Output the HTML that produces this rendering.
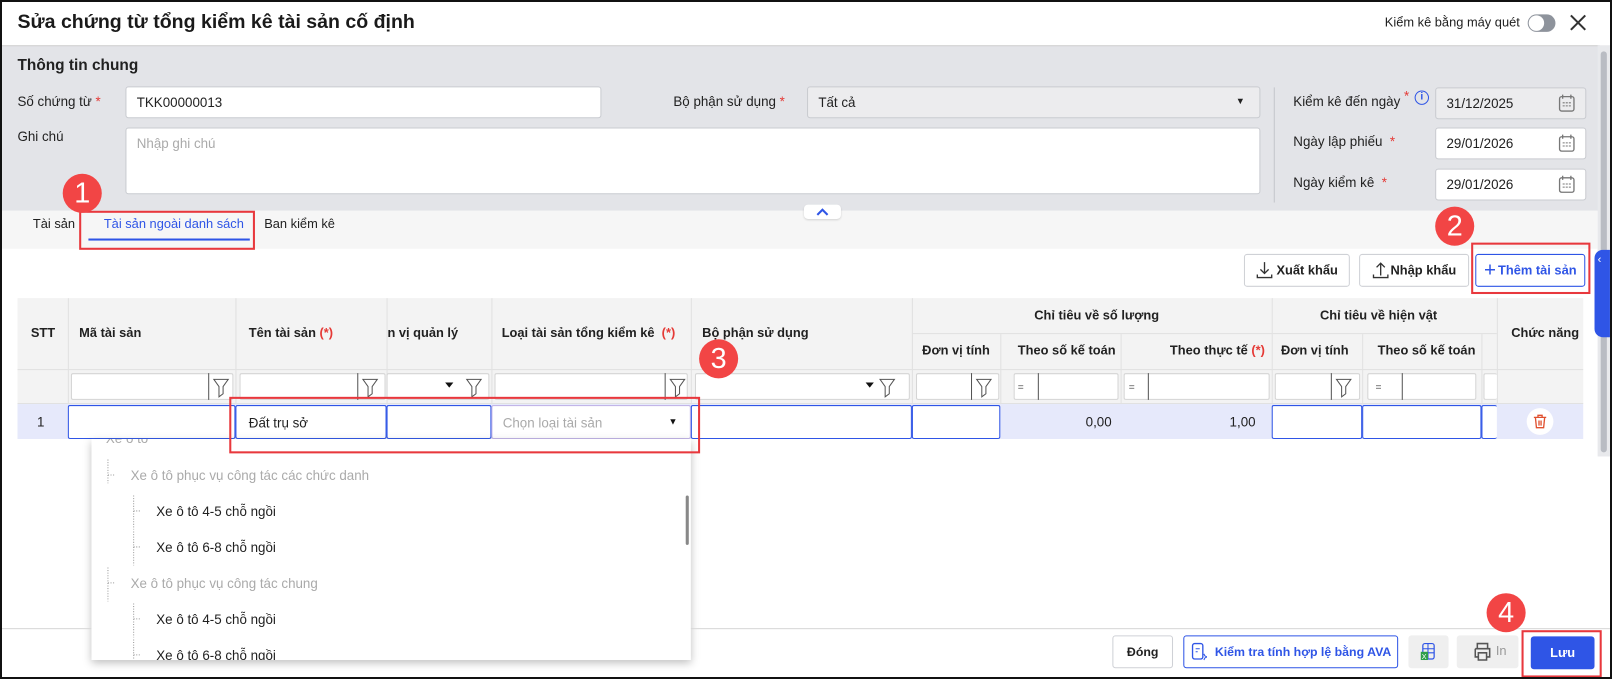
<!DOCTYPE html><html><head><meta charset="utf-8"><style>
*{box-sizing:border-box;margin:0;padding:0}
body{width:1612px;height:679px;overflow:hidden;font-family:"Liberation Sans",sans-serif;font-size:13px;color:#212121;background:#fff;position:relative}
#w{position:absolute;left:0;top:0;width:1568px;height:660px;transform:scale(1.02806);transform-origin:0 0}
.a{position:absolute}
.in{position:absolute;background:#fff;border:1px solid #c9cbd0;border-radius:3px}
.lbl{position:absolute;font-size:13px;color:#212121}
.req{color:#e53935}
.th{position:absolute;font-weight:bold;font-size:12.5px;color:#212121;display:flex;align-items:center}
.vl{position:absolute;width:1px;background:#e1e1e1}
.f{position:absolute;background:#fff;border:1px solid #d5d5d5;border-radius:2px;height:26px;top:363px}
.red{position:absolute;border:2.5px solid #e8383d}
.num{position:absolute;width:38px;height:38px;border-radius:50%;background:#f24545;color:#fff;font-size:28px;display:flex;align-items:center;justify-content:center}
.btn{position:absolute;border:1px solid #cfd1d6;border-radius:3px;background:#fff;display:flex;align-items:center;justify-content:center;font-size:12.5px;font-weight:bold}
.cell{position:absolute;border:1.5px solid #2f55e6;border-radius:2px;background:#fff;top:394px;height:33px}
.dd{font-size:13px;position:absolute}
</style></head><body>
<div class="a" style="left:0;top:0;width:1612px;height:679px;border:2px solid #111;z-index:50;pointer-events:none"></div>
<div id="w">
<div class="a" style="left:17px;top:11px;font-size:19px;font-weight:bold;color:#1a1a1a">Sửa chứng từ tổng kiểm kê tài sản cố định</div>
<div class="a" style="left:1347px;top:15px;font-size:12.5px">Kiểm kê bằng máy quét</div>
<div class="a" style="left:1486px;top:14px;width:27px;height:17px;border-radius:9px;background:#8e939c"><div class="a" style="left:1px;top:1px;width:15px;height:15px;border-radius:50%;background:#fff"></div></div>
<svg class="a" style="left:1527px;top:14px" width="16" height="16"><path d="M1 1L15 15M15 1L1 15" stroke="#333" stroke-width="2"/></svg>
<div class="a" style="left:2px;top:44px;width:1554px;height:161px;background:#e3e4e8;border-top:1px solid #d0d0d0"></div>
<div class="a" style="left:1554px;top:44px;width:12px;height:400px;background:#e8e9ec"></div>
<div class="a" style="left:1557px;top:50px;width:6px;height:390px;background:#b9bcc3;border-radius:3px"></div>
<div class="a" style="left:17px;top:55px;font-size:15px;font-weight:bold">Thông tin chung</div>
<div class="lbl" style="left:17px;top:91px">Số chứng từ <span class="req">*</span></div>
<div class="in" style="left:122px;top:84px;width:463px;height:31px;padding:7px 10px">TKK00000013</div>
<div class="lbl" style="left:17px;top:125px">Ghi chú</div>
<div class="in" style="left:122px;top:124px;width:1104px;height:65px;padding:7px 10px;color:#aaa">Nhập ghi chú</div>
<div class="lbl" style="left:655px;top:91px">Bộ phận sử dụng <span class="req">*</span></div>
<div class="in" style="left:785px;top:84px;width:441px;height:31px;background:#ececee;padding:7px 10px">Tất cả<span style="position:absolute;right:14px;top:8px;font-size:9px">▼</span></div>
<div class="a" style="left:1239px;top:85px;width:1px;height:112px;background:#c4c6cb"></div>
<div class="lbl" style="left:1258px;top:91px">Kiểm kê đến ngày <span class="req" style="position:relative;top:-5px">*</span></div>
<div class="a" style="left:1376px;top:88px;width:14px;height:14px;border:1.5px solid #2f55e6;border-radius:50%;color:#2f55e6;font-size:10px;text-align:center;line-height:11px;font-weight:bold">i</div>
<div class="lbl" style="left:1258px;top:130px">Ngày lập phiếu <span class="req">&nbsp;*</span></div>
<div class="lbl" style="left:1258px;top:170px">Ngày kiểm kê <span class="req">&nbsp;*</span></div>
<div class="in" style="left:1396px;top:85px;width:147px;height:31px;background:#ececee;padding:7px 10px">31/12/2025</div>
<div class="in" style="left:1396px;top:124px;width:147px;height:31px;padding:7px 10px">29/01/2026</div>
<div class="in" style="left:1396px;top:164px;width:147px;height:31px;padding:7px 10px">29/01/2026</div>
<svg class="a" style="left:1516px;top:91px" width="16" height="18"><rect x="1" y="3" width="14" height="14" rx="2" fill="none" stroke="#777" stroke-width="1.3"/><path d="M4 1v4M12 1v4" stroke="#777" stroke-width="1.3"/><path d="M4 9h2M7 9h2M10 9h2M4 12h2M7 12h2M10 12h2" stroke="#777"/></svg>
<svg class="a" style="left:1516px;top:130px" width="16" height="18"><rect x="1" y="3" width="14" height="14" rx="2" fill="none" stroke="#777" stroke-width="1.3"/><path d="M4 1v4M12 1v4" stroke="#777" stroke-width="1.3"/><path d="M4 9h2M7 9h2M10 9h2M4 12h2M7 12h2M10 12h2" stroke="#777"/></svg>
<svg class="a" style="left:1516px;top:170px" width="16" height="18"><rect x="1" y="3" width="14" height="14" rx="2" fill="none" stroke="#777" stroke-width="1.3"/><path d="M4 1v4M12 1v4" stroke="#777" stroke-width="1.3"/><path d="M4 9h2M7 9h2M10 9h2M4 12h2M7 12h2M10 12h2" stroke="#777"/></svg>
<div class="a" style="left:2px;top:205px;width:1552px;height:37px;background:#f6f6f6"></div>
<div class="a" style="left:782px;top:199px;width:36px;height:14px;background:#fff;border-radius:4px;box-shadow:0 1px 2px rgba(0,0,0,.15)"></div>
<svg class="a" style="left:794px;top:202px" width="12" height="8"><path d="M1 7L6 2L11 7" fill="none" stroke="#2f55e6" stroke-width="2"/></svg>
<div class="a" style="left:32px;top:211px;font-size:12.5px">Tài sản</div>
<div class="a" style="left:101px;top:211px;font-size:12.5px;color:#2f55e6">Tài sản ngoài danh sách</div>
<div class="a" style="left:86px;top:232px;width:157px;height:2px;background:#2f55e6"></div>
<div class="a" style="left:257px;top:211px;font-size:12.5px">Ban kiểm kê</div>
<div class="btn" style="left:1210px;top:247px;width:103px;height:32px"><svg width="16" height="18" style="margin-right:4px"><path d="M8 1v11M4 8l4 4 4-4M1 13v3h14v-3" fill="none" stroke="#333" stroke-width="1.3"/></svg>Xuất khẩu</div>
<div class="btn" style="left:1322px;top:247px;width:107px;height:32px"><svg width="16" height="18" style="margin-right:2px"><path d="M8 14V2M4 6l4-4 4 4M1 13v3h14v-3" fill="none" stroke="#333" stroke-width="1.3"/></svg>Nhập khẩu</div>
<div class="btn" style="left:1435px;top:247px;width:107px;height:32px;border-color:#2f55e6;color:#2f55e6"><span style="font-size:20px;font-weight:normal;margin-right:2px">+</span>Thêm tài sản</div>
<div class="a" style="left:1551px;top:243px;width:15px;height:85px;background:#2f55e6;border-radius:8px 0 0 8px;color:#fff;font-size:11px;padding-top:4px;padding-left:3px">‹</div>
<div class="a" style="left:17px;top:290px;width:1523px;height:103px;background:#f3f3f3;border-bottom:1px solid #e1e1e1"></div>
<div class="a" style="left:17px;top:359px;width:1523px;height:1px;background:#e1e1e1"></div>
<div class="a" style="left:887px;top:324px;width:569px;height:1px;background:#e1e1e1"></div>
<div class="vl" style="left:66px;top:290px;height:137px"></div>
<div class="vl" style="left:229px;top:290px;height:137px"></div>
<div class="vl" style="left:376px;top:290px;height:137px"></div>
<div class="vl" style="left:478px;top:290px;height:137px"></div>
<div class="vl" style="left:672px;top:290px;height:137px"></div>
<div class="vl" style="left:887px;top:290px;height:137px"></div>
<div class="vl" style="left:973px;top:325px;height:102px"></div>
<div class="vl" style="left:1090px;top:325px;height:102px"></div>
<div class="vl" style="left:1237px;top:290px;height:137px"></div>
<div class="vl" style="left:1325px;top:325px;height:102px"></div>
<div class="vl" style="left:1441px;top:325px;height:102px"></div>
<div class="vl" style="left:1456px;top:290px;height:137px"></div>
<div class="th" style="left:30px;top:317px">STT</div>
<div class="th" style="left:77px;top:317px">Mã tài sản</div>
<div class="th" style="left:242px;top:317px">Tên tài sản&nbsp;<span class="req">(*)</span></div>
<div class="a" style="left:377px;top:317px;width:100px;overflow:hidden;font-weight:bold;font-size:12.5px;white-space:nowrap"><span style="margin-left:-9px">ơn vị quản lý</span></div>
<div class="th" style="left:488px;top:317px">Loại tài sản tổng kiểm kê&nbsp;&nbsp;<span class="req">(*)</span></div>
<div class="th" style="left:683px;top:317px">Bộ phận sử dụng</div>
<div class="th" style="left:1006px;top:300px">Chỉ tiêu về số lượng</div>
<div class="a" style="left:1238px;top:300px;width:218px;overflow:hidden;white-space:nowrap;font-weight:bold;font-size:12.5px;padding-left:46px">Chỉ tiêu về hiện vật</div>
<div class="th" style="left:1470px;top:317px">Chức năng</div>
<div class="th" style="left:897px;top:334px">Đơn vị tính</div>
<div class="th" style="left:990px;top:334px">Theo số kế toán</div>
<div class="th" style="left:1138px;top:334px">Theo thực tế&nbsp;<span class="req">(*)</span></div>
<div class="th" style="left:1246px;top:334px">Đơn vị tính</div>
<div class="th" style="left:1340px;top:334px">Theo số kế toán</div>
<div class="f" style="left:69px;width:158px"></div>
<div class="f" style="left:233px;width:142px"></div>
<div class="f" style="left:376px;width:100px"></div>
<div class="f" style="left:481px;width:188px"></div>
<div class="f" style="left:676px;width:209px"></div>
<div class="f" style="left:891px;width:81px"></div>
<div class="f" style="left:986px;width:102px"></div>
<div class="f" style="left:1093px;width:142px"></div>
<div class="f" style="left:1240px;width:83px"></div>
<div class="f" style="left:1330px;width:106px"></div>
<div class="f" style="left:1443px;width:13px;border-right:none"></div>
<svg class="a" style="left:0;top:360px" width="1456" height="33">
<g fill="none" stroke="#555" stroke-width="1"><path d="M203 3v26M208 9h14l-5 7v7l-4 3v-10z"/><path d="M348 3v26M353 9h14l-5 7v7l-4 3v-10z"/><path d="M454 9h14l-5 7v7l-4 3v-10z"/><path d="M647 3v26M652 9h14l-5 7v7l-4 3v-10z"/><path d="M856 9h14l-5 7v7l-4 3v-10z"/><path d="M945 3v26M950 9h14l-5 7v7l-4 3v-10z"/><path d="M1010 3v26M1117 3v26M1364 3v26"/><path d="M1295 3v26M1300 9h14l-5 7v7l-4 3v-10z"/></g>
<path d="M433 12h8l-4 5z M842 12h8l-4 5z" fill="#111"/>
<g font-size="10" fill="#555" font-family="Liberation Sans"><text x="990" y="20">=</text><text x="1098" y="20">=</text><text x="1338" y="20">=</text></g>
</svg>
<div class="a" style="left:17px;top:393px;width:1523px;height:34px;background:#e6e9fb"></div>
<div class="a" style="left:36px;top:403px">1</div>
<div class="cell" style="left:66px;width:163px"></div>
<div class="cell" style="left:229px;width:147px;padding:9px 12px">Đất trụ sở</div>
<div class="cell" style="left:376px;width:102px"></div>
<div class="cell" style="left:478px;width:194px;border-color:#c2b5e8;padding:9px 10px;color:#aaa">Chọn loại tài sản<span style="position:absolute;right:12px;top:10px;color:#111;font-size:9px">▼</span></div>
<div class="cell" style="left:672px;width:215px"></div>
<div class="cell" style="left:887px;width:86px"></div>
<div class="a" style="left:1056px;top:403px">0,00</div>
<div class="a" style="left:1196px;top:403px">1,00</div>
<div class="cell" style="left:1237px;width:88px"></div>
<div class="cell" style="left:1325px;width:116px"></div>
<div class="cell" style="left:1441px;width:15px;border-right:none"></div>
<div class="a" style="left:1485px;top:397px;width:26px;height:26px;border-radius:50%;background:#fff"></div>
<svg class="a" style="left:1490px;top:402px" width="16" height="16"><path d="M2 4h12M6 4V2h4v2M3.5 4l1 10h7l1-10M7 7v5M9 7v5" fill="none" stroke="#e0502f" stroke-width="1.3"/></svg>
<div class="a" style="left:89px;top:427px;width:583px;height:215px;background:#fff;box-shadow:0 3px 8px rgba(0,0,0,.25);overflow:hidden">
<div class="dd" style="left:14px;top:-8px;color:#aaa">Xe ô tô</div>
<svg class="a" style="left:0;top:0" width="100" height="215"><g stroke="#999" stroke-dasharray="1,1.5" fill="none"><path d="M16 20v23M16 35h7M41 55v33M41 70h7M41 90v33M41 105h7M16 125v33M16 140h7M41 160v33M41 175h7M41 195v20M41 210h7"/></g></svg>
<div class="dd" style="left:38px;top:28px;color:#aaa">Xe ô tô phục vụ công tác các chức danh</div>
<div class="dd" style="left:63px;top:63px">Xe ô tô 4-5 chỗ ngồi</div>
<div class="dd" style="left:63px;top:98px">Xe ô tô 6-8 chỗ ngồi</div>
<div class="dd" style="left:38px;top:133px;color:#aaa">Xe ô tô phục vụ công tác chung</div>
<div class="dd" style="left:63px;top:168px">Xe ô tô 4-5 chỗ ngồi</div>
<div class="dd" style="left:63px;top:203px">Xe ô tô 6-8 chỗ ngồi</div>
<div class="a" style="left:578px;top:55px;width:3px;height:48px;background:#888;border-radius:2px"></div>
</div>
<div class="a" style="left:2px;top:611px;width:87px;height:1px;background:#d7d7d7"></div>
<div class="a" style="left:672px;top:611px;width:894px;height:1px;background:#d7d7d7"></div>
<div class="btn" style="left:1082px;top:618px;width:59px;height:32px;font-size:12px">Đóng</div>
<div class="btn" style="left:1151px;top:618px;width:209px;height:32px;border-color:#2f55e6;color:#2f55e6;font-size:12px;white-space:nowrap"><svg width="16" height="18" style="margin-right:8px;flex:none"><rect x="2" y="1" width="10" height="15" rx="2" fill="none" stroke="#2f55e6" stroke-width="1.3"/><path d="M5 6h4M5 9h2M13 11l1 2 2 1-2 1-1 2" stroke="#2f55e6" fill="none"/></svg>Kiểm tra tính hợp lệ bằng AVA</div>
<div class="a" style="left:1370px;top:618px;width:39px;height:32px;background:#efefef;border-radius:3px"></div>
<svg class="a" style="left:1381px;top:625px" width="16" height="18"><rect x="3" y="1" width="11" height="15" rx="2" fill="none" stroke="#2f55e6" stroke-width="1.2"/><path d="M3 6h11M3 10h11M8 1v15" stroke="#2f55e6"/><rect x="1" y="9" width="7" height="8" fill="#2e9e4a"/><text x="2" y="16" font-size="7" fill="#fff" font-family="Liberation Sans">X</text></svg>
<div class="a" style="left:1417px;top:618px;width:60px;height:32px;background:#efefef;border-radius:3px;color:#999;font-size:12.5px;padding:8px 0 0 38px">In</div>
<svg class="a" style="left:1432px;top:624px" width="20" height="20"><path d="M5 7V2h10v5M3 7h14v8h-3M6 15H3V7M6 11h8v7H6z" fill="none" stroke="#555" stroke-width="1.5"/></svg>
<div class="a" style="left:1489px;top:619px;width:62px;height:32px;background:#2f55e6;border-radius:3px;color:#fff;font-weight:bold;font-size:12.5px;display:flex;align-items:center;justify-content:center">Lưu</div>
<div class="red" style="left:77px;top:205px;width:171px;height:38px"></div>
<div class="num" style="left:61px;top:169px">1</div>
<div class="red" style="left:1431px;top:236px;width:116px;height:50px"></div>
<div class="num" style="left:1396px;top:201px">2</div>
<div class="red" style="left:223px;top:386px;width:458px;height:55px"></div>
<div class="num" style="left:680px;top:330px">3</div>
<div class="red" style="left:1480px;top:613px;width:78px;height:46px"></div>
<div class="num" style="left:1446px;top:577px">4</div>
</div>
</body></html>
